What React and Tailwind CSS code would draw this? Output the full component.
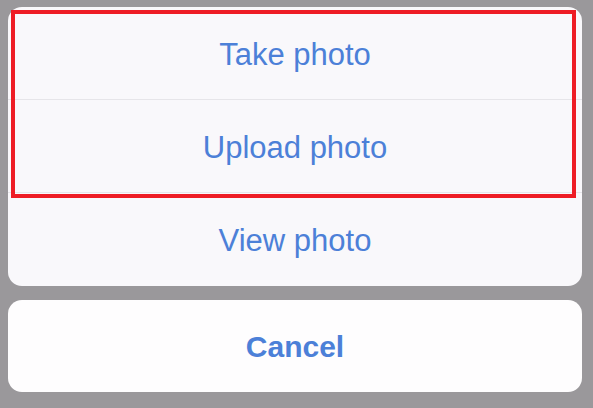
const ACTIONS = ['Take photo', 'Upload photo', 'View photo'];

export default function App() {
  return (
    <div
      className="relative w-[593px] h-[408px] bg-[#9a989b] pl-[8px] pr-[11px] pt-[7px] flex flex-col gap-[14px]"
      style={{ fontFamily: '"Liberation Sans", Arial, sans-serif' }}
    >
      {/* Action list */}
      <div className="rounded-[14px] bg-[#f9f8fb] flex flex-col overflow-hidden">
        {ACTIONS.map((label, i) => (
          <div
            key={label}
            className={`h-[93px] pt-[4px] flex items-center justify-center text-[31px] text-[#4c80d8] ${
              i < ACTIONS.length - 1 ? 'border-b border-[#e6e5e9]' : ''
            }`}
          >
            {label}
          </div>
        ))}
      </div>

      {/* Cancel */}
      <div className="h-[92px] rounded-[14px] bg-[#fefdfe] flex items-center justify-center text-[30px] font-bold text-[#4c80d8]">
        Cancel
      </div>

      {/* Highlight annotation */}
      <div className="absolute left-[11px] top-[10px] w-[565px] h-[188px] border-[4px] border-[#ee1c25] pointer-events-none" />
    </div>
  );
}
